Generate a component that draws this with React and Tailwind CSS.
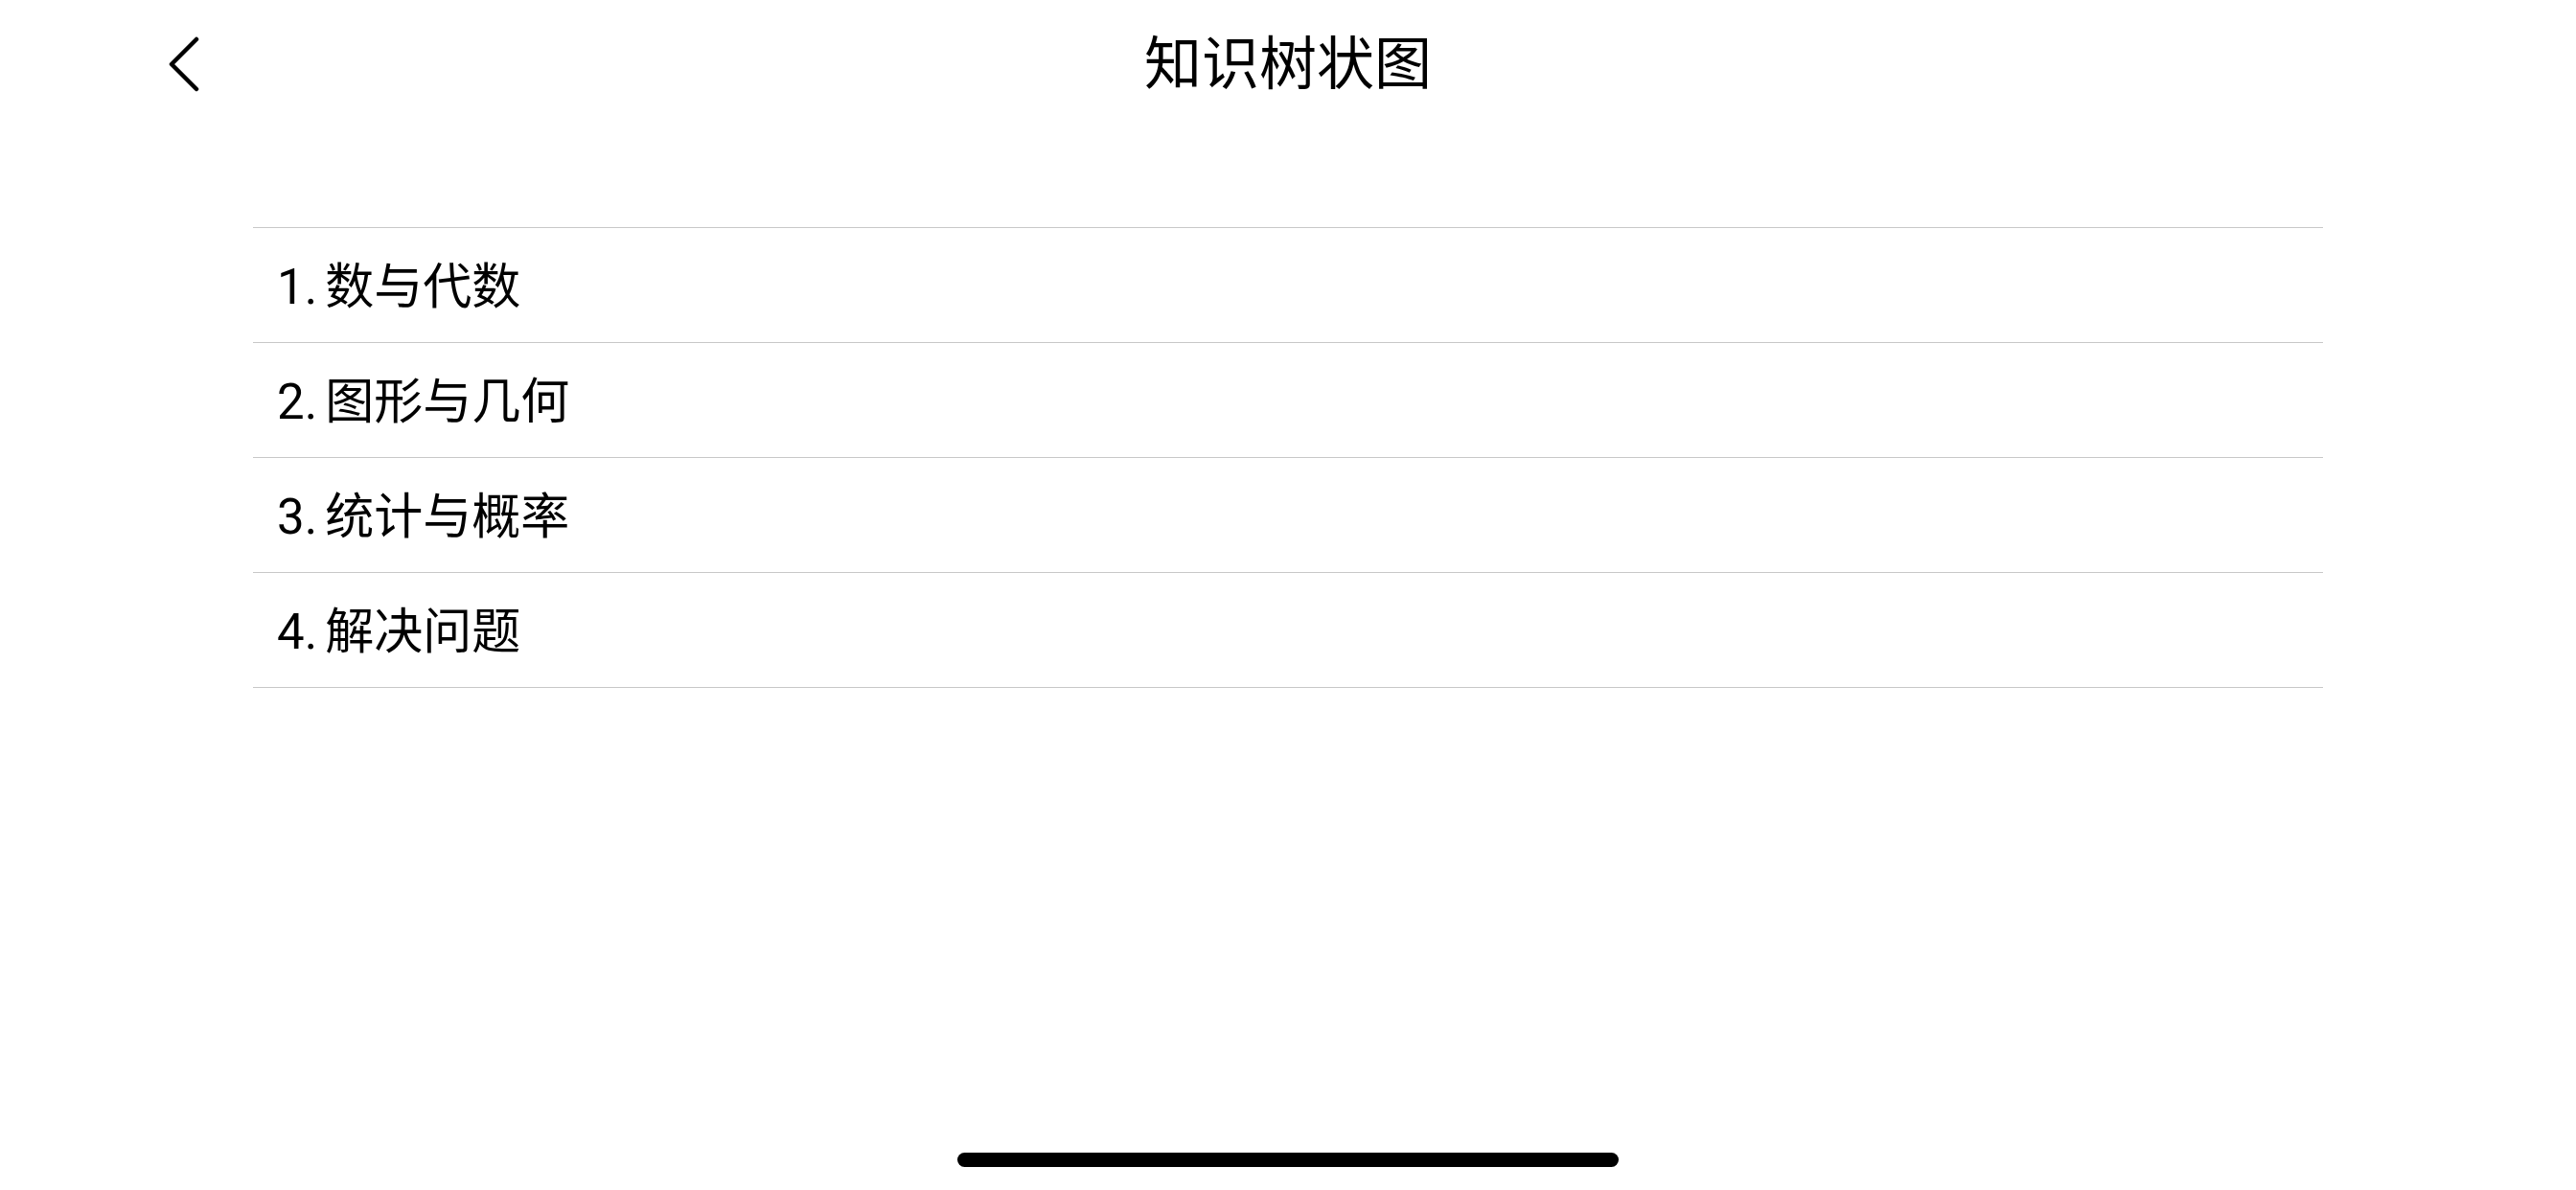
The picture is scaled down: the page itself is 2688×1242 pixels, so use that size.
export default function App() {
  const items = [
    ["1.", "数与代数"],
    ["2.", "图形与几何"],
    ["3.", "统计与概率"],
    ["4.", "解决问题"],
  ];
  return (
    <div
      className="w-full h-[1242px] bg-white flex flex-col text-black pt-[2px]"
      style={{ fontFamily: "Roboto, 'Noto Sans CJK SC', sans-serif" }}
    >
      <div className="h-[132px] grid grid-cols-[1fr_auto_1fr] items-center">
        <div className="pl-[174px] flex items-center">
          <svg width="36" height="60" viewBox="0 0 36 60" fill="none">
            <polyline
              points="31,3 5,29 31,55"
              stroke="#000"
              strokeWidth="4.5"
              strokeLinecap="round"
              strokeLinejoin="round"
            />
          </svg>
        </div>
        <div className="text-[60px] leading-none font-normal">知识树状图</div>
        <div></div>
      </div>
      <div className="mt-[103px] mx-auto w-[2160px] border-t border-[#c8c8c8]">
        {items.map(([n, t]) => (
          <div
            key={t}
            className="h-[120px] border-b border-[#c8c8c8] flex items-center pl-[25px] pt-[3px] text-[51px] leading-none"
          >
            <span>{n}</span>
            <span className="ml-[8px]">{t}</span>
          </div>
        ))}
      </div>
      <div className="flex-1"></div>
      <div className="mx-auto mb-[24px] w-[690px] h-[15px] rounded-full bg-black"></div>
    </div>
  );
}
